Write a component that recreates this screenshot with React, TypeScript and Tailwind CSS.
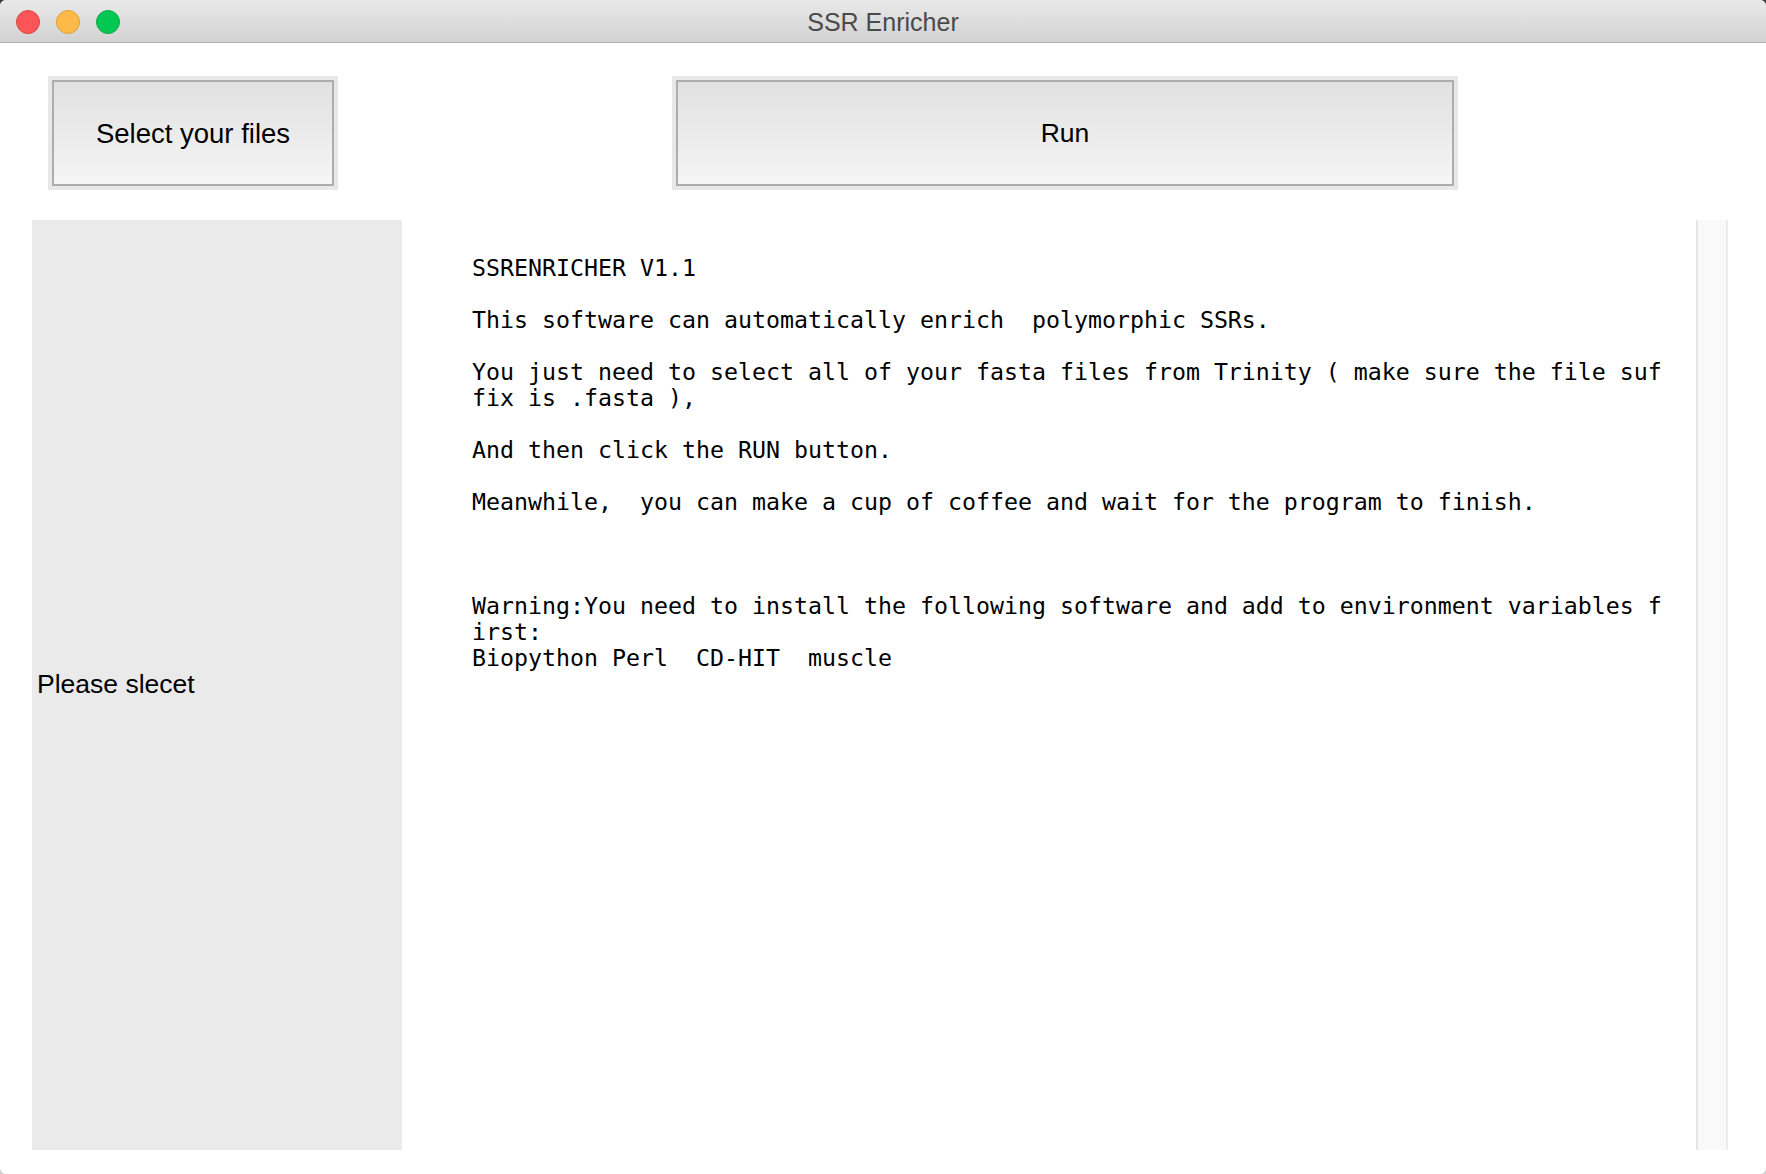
import React from "react";

const LINES = [
  "SSRENRICHER V1.1",
  "",
  "This software can automatically enrich  polymorphic SSRs.",
  "",
  "You just need to select all of your fasta files from Trinity ( make sure the file suf",
  "fix is .fasta ),",
  "",
  "And then click the RUN button.",
  "",
  "Meanwhile,  you can make a cup of coffee and wait for the program to finish.",
  "",
  "",
  "",
  "Warning:You need to install the following software and add to environment variables f",
  "irst:",
  "Biopython Perl  CD-HIT  muscle",
];

const uiFont = { fontFamily: '"Liberation Sans", Arial, sans-serif' };

function TrafficLights() {
  return (
    <div className="flex items-center gap-[16px] pl-[16px] pt-[2px]">
      <span className="block h-[24px] w-[24px] rounded-full border border-[#e0443e] bg-[#fc5558]" />
      <span className="block h-[24px] w-[24px] rounded-full border border-[#dea12f] bg-[#fdb94a]" />
      <span className="block h-[24px] w-[24px] rounded-full border border-[#10a945] bg-[#00c853]" />
    </div>
  );
}

function FrameButton({ label, className, size }: { label: string; className: string; size: string }) {
  return (
    <div className={`h-[114px] bg-[#e8e8e8] p-[4px] ${className}`}>
      <button
        type="button"
        className={`flex h-full w-full items-center justify-center border-2 border-[#adadad] bg-gradient-to-b from-[#e1e1e1] to-[#f5f5f5] text-black ${size}`}
        style={uiFont}
      >
        {label}
      </button>
    </div>
  );
}

export default function App() {
  return (
    <div className="h-[1174px] w-[1766px] bg-gradient-to-b from-[#3a3a3a] to-[#cfcfcf]">
      <div className="flex h-full w-full flex-col overflow-hidden rounded-[6px] bg-white">
        {/* title bar */}
        <div className="relative flex h-[43px] shrink-0 items-center border-b border-[#b1b1b1] bg-gradient-to-b from-[#e9e9e9] to-[#d2d2d2]">
          <TrafficLights />
          <div
            className="absolute inset-0 flex items-center justify-center pt-[4px] text-[25px] text-[#4a4a4a]"
            style={uiFont}
          >
            SSR Enricher
          </div>
        </div>

        {/* toolbar row */}
        <div className="mt-[33px] flex shrink-0 pl-[48px]">
          <FrameButton label="Select your files" className="w-[290px]" size="text-[27.5px] pt-[2px]" />
          <FrameButton label="Run" className="ml-[334px] w-[786px]" size="text-[26.5px] pt-[2px]" />
        </div>

        {/* body */}
        <div className="mt-[30px] flex h-[930px] shrink-0 pl-[32px]">
          <div className="flex w-[370px] items-center bg-[#eaeaea] pl-[5px]">
            <span className="text-[26.5px] text-black" style={uiFont}>
              Please slecet
            </span>
          </div>
          <div className="w-[1294px] bg-white pl-[70px] pt-[35px]">
            <pre
              className="whitespace-pre text-[23.25px] leading-[26px] text-black"
              style={{ fontFamily: '"DejaVu Sans Mono", "Liberation Mono", monospace' }}
            >
              {LINES.join("\n")}
            </pre>
          </div>
          <div className="w-[32px] border-l-2 border-r-2 border-l-[#e6e6e6] border-r-[#ececec] bg-[#f9f9f9]" />
        </div>
      </div>
    </div>
  );
}
